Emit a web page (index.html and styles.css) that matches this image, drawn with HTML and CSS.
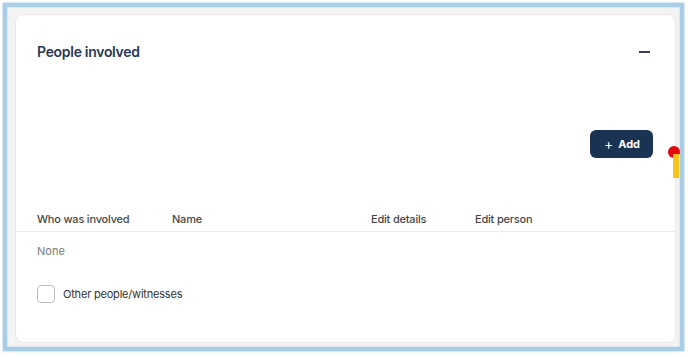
FILE: index.html
```html
<!DOCTYPE html>
<html lang="en">
<head>
<meta charset="utf-8"/>
<meta content="width=device-width, initial-scale=1.0" name="viewport"/>
<title>People involved</title>
<link rel="stylesheet" href="styles.css">
</head>
<body>
<div class="frame">
  <div class="card">
    <div class="card-head">
      <h2>People involved</h2>
      <span class="collapse"></span>
    </div>

    <div class="actions">
      <button class="add-btn"><span class="plus">+</span> Add</button>
    </div>

    <div class="table-head">
      <span class="col-who">Who was involved</span>
      <span class="col-name">Name</span>
      <span class="col-details">Edit details</span>
      <span class="col-person">Edit person</span>
    </div>

    <p class="empty">None</p>

    <label class="check">
      <span class="box"></span>
      Other people/witnesses
    </label>
  </div>

  <!-- marker peeking in from the side -->
  <span class="dot"></span>
  <span class="bar"></span>
</div>
</body>
</html>
```

FILE: styles.css
```css
body {
    margin: 0;
    padding: 3px;
    background: #ffffff;
    font-family: Inter, "Open Sans", sans-serif;
}

.frame {
    position: relative;
    overflow: hidden;
    width: 661px;
    height: 329px;
    padding: 7px 4px 4px 8px;
    border: 4px solid #a8cde6;
    box-shadow: 0 0 2px rgba(120, 170, 210, 0.8), inset 0 0 2px rgba(120, 170, 210, 0.6);
    background: #f4f4f4;
}

.card {
    height: 327px;
    background: #ffffff;
    border: 1px solid #e8e8e8;
    border-radius: 8px;
}

.card-head {
    display: flex;
    align-items: center;
    justify-content: space-between;
    padding: 28px 25px 0 21px;
}

.card-head h2 {
    margin: 0;
    font-size: 14px;
    font-weight: 600;
    letter-spacing: -0.3px;
    color: #283a55;
}

.collapse {
    width: 11px;
    height: 2px;
    background: #3a4150;
}

.actions {
    display: flex;
    justify-content: flex-end;
    padding: 70px 22px 0 0;
}

.add-btn {
    display: flex;
    align-items: center;
    gap: 5px;
    height: 28px;
    padding: 0 13px 0 14px;
    border: none;
    border-radius: 6px;
    background: #1b3352;
    color: #ffffff;
    font-family: inherit;
    font-size: 11px;
    font-weight: 700;
}

.add-btn .plus {
    font-size: 14px;
    font-weight: 400;
    margin-top: -2px;
}

.table-head {
    display: flex;
    margin-top: 54px;
    padding: 0 0 5px 21px;
    border-bottom: 1px solid #ececec;
    font-size: 11px;
    font-weight: 500;
    letter-spacing: -0.2px;
    color: #474747;
}

.col-who { width: 135px; }
.col-name { width: 199px; }
.col-details { width: 104px; }

.empty {
    margin: 12px 0 0 21px;
    font-size: 11px;
    color: #7a7a7a;
}

.check {
    display: flex;
    align-items: center;
    gap: 8px;
    margin: 27px 0 0 21px;
    font-size: 11px;
    letter-spacing: -0.2px;
    color: #333333;
}

.check .box {
    width: 16px;
    height: 16px;
    border: 1px solid #bdbdbd;
    border-radius: 4px;
}

.dot {
    position: absolute;
    top: 139px;
    left: 661px;
    width: 12px;
    height: 12px;
    border-radius: 50%;
    background: #e00b0b;
}

.bar {
    position: absolute;
    top: 147px;
    left: 666px;
    width: 6px;
    height: 24px;
    background: #f7c21a;
}
```
